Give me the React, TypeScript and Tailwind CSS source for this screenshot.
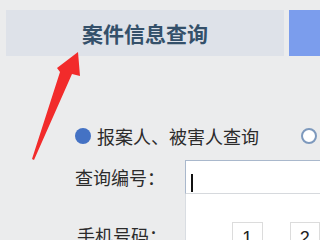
export default function App() {
  return (
    <div className="relative w-[320px] h-[240px] overflow-hidden bg-[#ebeced] font-['Microsoft_YaHei','Noto_Sans_CJK_SC',sans-serif]">
      <div className="flex gap-[5px] pl-[6px] pt-[10px]">
        <div className="w-[278px] h-[46px] shrink-0 bg-[#dee2e9] flex items-center justify-center">
          <span className="text-[21px] leading-[24px] font-bold text-[#34506a]">案件信息查询</span>
        </div>
        <div className="flex-1 h-[46px] bg-[#7b9ded]" />
      </div>

      <div className="mt-[70px] pl-[75px] flex items-center h-[20px] whitespace-nowrap">
        <span className="w-4 h-4 rounded-full bg-[#4472c4] shrink-0" />
        <span className="ml-[6px] text-[18px] leading-[20px] text-[#2b2b2b]">报案人、被害人查询</span>
        <span className="ml-[42px] w-4 h-4 rounded-full border-2 border-[#7d99bd] bg-white shrink-0" />
      </div>

      <div className="mt-[14px] pl-[75px] flex items-center">
        <span className="w-[110px] shrink-0 text-[18px] leading-[20px] text-[#2b2b2b]">查询编号：</span>
        <div className="flex-1 h-[34px] bg-white border-t border-l border-[#a9b8cc] border-b-[#d6d9dd] border-b flex items-end pl-[5px] pb-[1px]">
          <span className="w-[2px] h-[18px] bg-[#111]" />
        </div>
      </div>

      <div className="mt-[31px] pl-[77px] text-[18px] leading-[20px] text-[#2b2b2b] whitespace-nowrap">手机号码：</div>

      <div className="absolute left-[185px] top-[194px] right-0 h-[60px] bg-white border-l border-[#d9dde2]">
        <div className="flex gap-[27px] pl-[46px] pt-[28px]">
          <div className="w-[39px] h-[32px] border border-[#dcdcdc] flex items-center justify-center text-[18px] text-[#222] font-['Liberation_Sans',sans-serif]">1</div>
          <div className="w-[39px] h-[32px] border border-[#dcdcdc] flex items-center justify-center text-[18px] text-[#222] font-['Liberation_Sans',sans-serif]">2</div>
        </div>
      </div>

      <svg className="absolute inset-0 pointer-events-none" width="320" height="240" viewBox="0 0 320 240">
        <polygon points="78,52 80,76 72,74 34,160 32,159 60,72 57,68" fill="#f22b2b" />
      </svg>
    </div>
  );
}
